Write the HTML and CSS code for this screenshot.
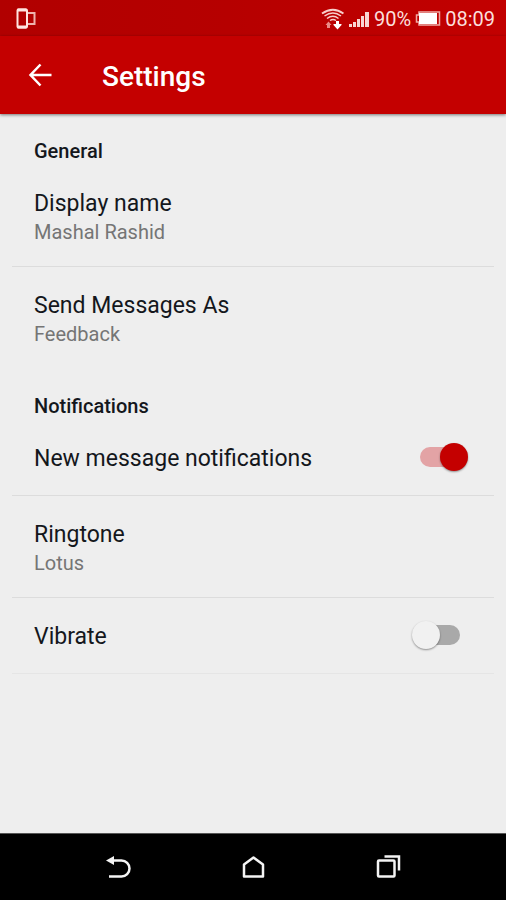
FILE: index.html
```html
<!DOCTYPE html>
<html lang="en">
<head>
<meta charset="utf-8">
<meta name="viewport" content="width=device-width, initial-scale=1">
<title>Settings</title>
<link rel="stylesheet" href="styles.css">
</head>
<body>
<div class="status-bar">
  <svg width="22" height="24" viewBox="0 0 22 24" fill="none" stroke="#ffe4e0" stroke-width="2">
    <path d="M12 6h7.500v11h-7.500z" stroke="#eeb3ae"/>
    <rect x="2.500" y="2.500" width="9.500" height="18" rx="1"/>
    <path d="M2.500 3h9M2.500 20h9" stroke-width="3"/>
  </svg>
  <div class="status-right">
    <svg width="24" height="24" viewBox="0 0 24 24" fill="none" stroke="#f8cfcb" stroke-width="2">
      <path d="M2 6.500Q13-1 23.500 6.500"/>
      <path d="M4.500 9Q13 3 21 9M7 11.500Q13 7 18.500 11.500M10 13.500Q13 11.500 16 13.500" stroke-width="1.500"/>
      <path d="M8.500 14.500l3 3.500h-1.500v3h-3v-3h-1.500z" fill="#e98b86" stroke="none"/>
      <path d="M16 14h3v3h2.500v1l-4 4.500l-4-4.500v-1h2.500z" fill="#fff" stroke="none"/>
    </svg>
    <svg width="22" height="18" viewBox="0 0 22 18" fill="#f8d6d3">
      <path d="M1 14h3v3H1zM5 12h3v5H5zM9 9h3v8H9zM13 6h3v11h-3zM17 2h4v15h-4z"/>
    </svg>
    <span>90%</span>
    <svg width="26" height="16" viewBox="0 0 26 16">
      <path d="M4 1h20.500v13H4v-3H1.500v-7H4z" fill="none" stroke="#eeaaa5" stroke-width="1.500"/>
      <path d="M4 2h18v11h-18z" fill="#fff"/>
    </svg>
    <time>08:09</time>
  </div>
</div>

<header class="app-bar">
  <button class="back" type="button" aria-label="Back">
    <svg width="24" height="24" viewBox="0 0 24 24" fill="none" stroke="#fff" stroke-width="2.500">
      <path d="M12.500 1.500L2.500 12L12.500 22.500M2.500 12H23.500"/>
    </svg>
  </button>
  <h1>Settings</h1>
</header>

<main>
  <section>
    <h2>General</h2>
    <button class="row" type="button">
      <span class="label">Display name</span>
      <span class="value">Mashal Rashid</span>
    </button>
    <button class="row last" type="button">
      <span class="label">Send Messages As</span>
      <span class="value">Feedback</span>
    </button>
  </section>
  <section>
    <h2>Notifications</h2>
    <label class="row toggle">
      <span class="label">New message notifications</span>
      <input class="switch" type="checkbox" role="switch" checked>
    </label>
    <button class="row" type="button">
      <span class="label">Ringtone</span>
      <span class="value">Lotus</span>
    </button>
    <label class="row toggle">
      <span class="label">Vibrate</span>
      <input class="switch" type="checkbox" role="switch">
    </label>
  </section>
</main>

<nav class="nav-bar" aria-label="System">
  <button type="button" aria-label="Back">
    <svg width="26" height="26" viewBox="0 0 26 26" fill="none" stroke="#f4f4f4" stroke-width="2.500">
      <path d="M7 6.500H16.500A8 8 0 0 1 16.500 22.500H4"/>
      <path d="M1 6.500L9 2v9z" fill="#f4f4f4" stroke="none"/>
    </svg>
  </button>
  <button type="button" aria-label="Home">
    <svg width="26" height="26" viewBox="0 0 26 26" fill="none" stroke="#f4f4f4" stroke-width="2.500" stroke-linejoin="round">
      <path d="M4 10.500L13.500 3.500L23 10.500V22.500H4z"/>
    </svg>
  </button>
  <button type="button" aria-label="Recent apps">
    <svg width="26" height="26" viewBox="0 0 26 26" fill="none" stroke="#f4f4f4" stroke-width="2.500">
      <rect x="3" y="6.500" width="16.500" height="16" rx="1"/>
      <path d="M9.500 2.500H24V16.500"/>
    </svg>
  </button>
</nav>
</body>
</html>
```
FILE: styles.css
```css
* {
  box-sizing: border-box;
}

body {
  margin: 0;
  min-height: 100vh;
  display: flex;
  flex-direction: column;
  background: #eeeeee;
  color: #14171c;
  font-family: Roboto, "Liberation Sans", sans-serif;
}

button {
  border: 0;
  padding: 0;
  background: none;
  color: inherit;
  font: inherit;
  text-align: left;
}

svg {
  display: block;
}

.status-bar {
  display: flex;
  align-items: center;
  justify-content: space-between;
  height: 36px;
  padding: 2px 11px 0 15px;
  background: linear-gradient(90deg, #b10000, #b60000 45%, #c20000);
  color: #fbdfdc;
  font-size: 20px;
}

.status-right {
  display: flex;
  align-items: center;
  gap: 4px;
}

.app-bar {
  display: flex;
  align-items: center;
  height: 78px;
  padding: 0 28px;
  background: #c40000;
  color: #fff;
  box-shadow: 0 1px 3px rgba(0, 0, 0, 0.5);
}

.back {
  width: 74px;
}

h1 {
  margin: 0;
  padding-top: 2px;
  font-size: 28px;
  font-weight: 500;
}

main {
  flex: 1;
  padding: 0 12px;
}

h2 {
  height: 51px;
  margin: 0;
  padding: 24px 22px 0;
  font-size: 20px;
  line-height: 26px;
  font-weight: 500;
}

.row {
  display: flex;
  flex-direction: column;
  justify-content: center;
  width: 100%;
  min-height: 102px;
  padding: 4px 22px 0;
  border-bottom: 1px solid #dcdcdc;
}

.last {
  border-bottom-color: transparent;
}

.toggle {
  flex-direction: row;
  align-items: center;
  justify-content: space-between;
  min-height: 76px;
  padding: 0 26px 0 22px;
}

.toggle:last-child {
  border-bottom-color: #e5e5e5;
}

.label {
  font-size: 23px;
  line-height: 28px;
}

.toggle .label {
  padding-top: 2px;
}

.value {
  color: #757575;
  font-size: 20px;
  line-height: 28px;
}

.switch {
  appearance: none;
  position: relative;
  width: 56px;
  height: 30px;
  margin: 0;
}

.switch::before,
.switch::after {
  content: "";
  position: absolute;
}

.switch::before {
  top: 4px;
  left: 8px;
  width: 40px;
  height: 20px;
  border-radius: 10px;
  background: #a9a9a9;
}

.switch::after {
  top: 0;
  left: 0;
  width: 28px;
  height: 28px;
  border-radius: 50%;
  background: #f1f1f1;
  box-shadow: 0 1px 2px rgba(0, 0, 0, 0.4);
}

.switch:checked::before {
  background: #e3a3a5;
}

.switch:checked::after {
  left: 28px;
  background: #c40000;
}

.nav-bar {
  display: flex;
  justify-content: center;
  gap: 109px;
  height: 67px;
  border-top: 1px solid #555;
  background: #000;
}
```
